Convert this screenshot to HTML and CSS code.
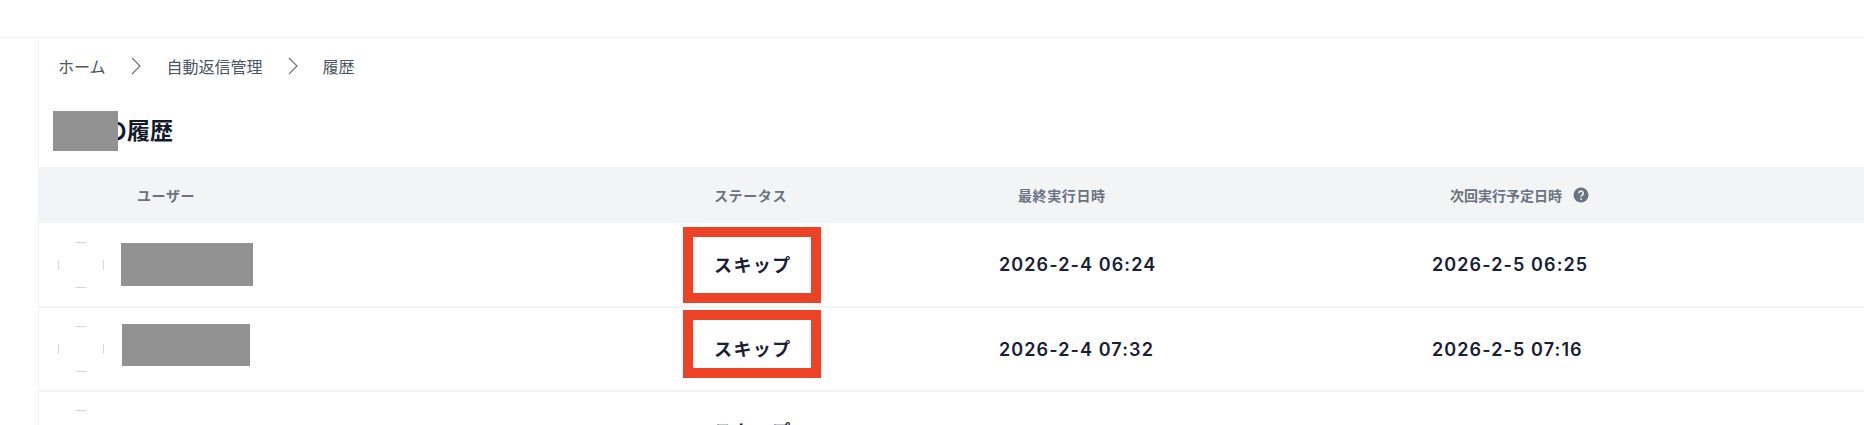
FILE: index.html
```html
<!DOCTYPE html>
<html lang="ja">
<head>
<meta charset="utf-8">
<title>履歴</title>
<link rel="stylesheet" href="styles.css">
</head>
<body>
<header class="topbar"></header>
<div class="shell">
  <aside class="side"></aside>
  <main class="main">
    <nav class="crumbs">
      <span>ホーム</span>
      <svg class="chev" viewBox="0 0 10 18"><path d="M1 1l8 8-8 8"/></svg>
      <span>自動返信管理</span>
      <svg class="chev" viewBox="0 0 10 18"><path d="M1 1l8 8-8 8"/></svg>
      <span>履歴</span>
    </nav>
    <div class="title-wrap">
      <h1 class="title">配信の履歴</h1>
      <div class="mask mask-title"></div>
    </div>
    <div class="row head">
      <div class="cell h-user">ユーザー</div>
      <div class="cell">ステータス</div>
      <div class="cell h-last">最終実行日時</div>
      <div class="cell h-next">次回実行予定日時
        <svg class="help" viewBox="0 0 16 16"><circle cx="8" cy="8" r="7.5"/><path d="M5.8 6.2a2.2 2.2 0 1 1 3.4 1.9c-.8.5-1.2.9-1.2 1.7"/><circle class="dot" cx="8" cy="12" r=".9"/></svg>
      </div>
    </div>
    <div class="row body">
      <div class="cell user">
        <svg class="avatar" viewBox="0 0 46 46"><path d="M17.5 .6h11M17.5 45.4h11M.6 18v10M45.4 18v10"/></svg>
        <div class="name name-a"></div>
      </div>
      <div class="cell status">スキップ<span class="mark mark-a"></span></div>
      <div class="cell">2026-2-4 06:24</div>
      <div class="cell">2026-2-5 06:25</div>
    </div>
    <div class="row body">
      <div class="cell user">
        <svg class="avatar" viewBox="0 0 46 46"><path d="M17.5 .6h11M17.5 45.4h11M.6 18v10M45.4 18v10"/></svg>
        <div class="name name-b"></div>
      </div>
      <div class="cell status">スキップ<span class="mark mark-b"></span></div>
      <div class="cell">2026-2-4 07:32</div>
      <div class="cell">2026-2-5 07:16</div>
    </div>
    <div class="row body">
      <div class="cell user">
        <svg class="avatar" viewBox="0 0 46 46"><path d="M17.5 .6h11M17.5 45.4h11M.6 18v10M45.4 18v10"/></svg>
      </div>
      <div class="cell status status-last">スキップ</div>
      <div class="cell"></div>
      <div class="cell"></div>
    </div>
  </main>
</div>
</body>
</html>
```
FILE: styles.css
```css
* { box-sizing: border-box; }
html, body { margin: 0; height: 425px; overflow: hidden; background: #fff; }
body { font-family: Inter, "Noto Sans CJK JP", sans-serif; color: #1a2033; }

.topbar { height: 38px; border-bottom: 1px solid #f3f4f6; }
.shell { display: flex; }
.side { width: 39px; flex: none; border-right: 1px solid #f0f1f3; height: 387px; }
.main { flex: 1; min-width: 0; height: 387px; overflow: hidden; }

.crumbs { height: 56px; margin-bottom: 2px; display: flex; align-items: center; padding-left: 19px; font-size: 16px; color: #4b5563; }
.chev { width: 10px; height: 18px; margin: 0 26px 0 25px; fill: none; stroke: #6b7280; stroke-width: 1.2; }
.chev + span + .chev { margin-right: 25px; }

.title-wrap { position: relative; height: 71px; padding: 19px 0 0 19px; }
.title { margin: 0; font-size: 23px; line-height: 32px; font-weight: 700; color: #141a2b; }
.mask { background: #929292; }
.mask-title { position: absolute; left: 14px; top: 15px; width: 65px; height: 40px; }

.row { display: grid; grid-template-columns: 675px 285px 433px 1fr; align-items: center; }
.head { height: 56px; background: #f3f4f6; font-size: 14px; font-weight: 600; color: #6b7280; letter-spacing: .6px; }
.body { height: 84px; border-bottom: 2px solid #f3f4f6; font-size: 18px; font-weight: 600; letter-spacing: 1.1px; color: #1a2033; }
.head + .body { height: 85px; }
.cell { display: flex; align-items: center; white-space: nowrap; }
.h-user { padding-left: 98px; }
.h-last { padding-left: 19px; }
.h-next { padding-left: 18px; gap: 11px; letter-spacing: 0; }
.help { width: 16px; height: 16px; }
.help circle { fill: #6b7280; }
.help path { fill: none; stroke: #f3f4f6; stroke-width: 1.6; }
.help .dot { fill: #f3f4f6; }

.user { padding-left: 19px; gap: 17px; }
.avatar { width: 46px; height: 46px; flex: none; fill: none; stroke: #d4d4d4; stroke-width: 1; }
.name { background: #929292; flex: none; }
.name-a { width: 132px; height: 43px; margin-top: 0; }
.name-b { width: 128px; height: 42px; margin: -9px 0 0 1px; }

.status { position: relative; align-self: stretch; padding-bottom: 2px; font-weight: 700; letter-spacing: 1.4px; }
.status-last { padding-bottom: 6px; }
.mark { position: absolute; left: -31px; border: 10px solid #ec4226; width: 138px; }
.mark-a { height: 76px; top: 4px; }
.mark-b { height: 68px; top: 2px; }
```
